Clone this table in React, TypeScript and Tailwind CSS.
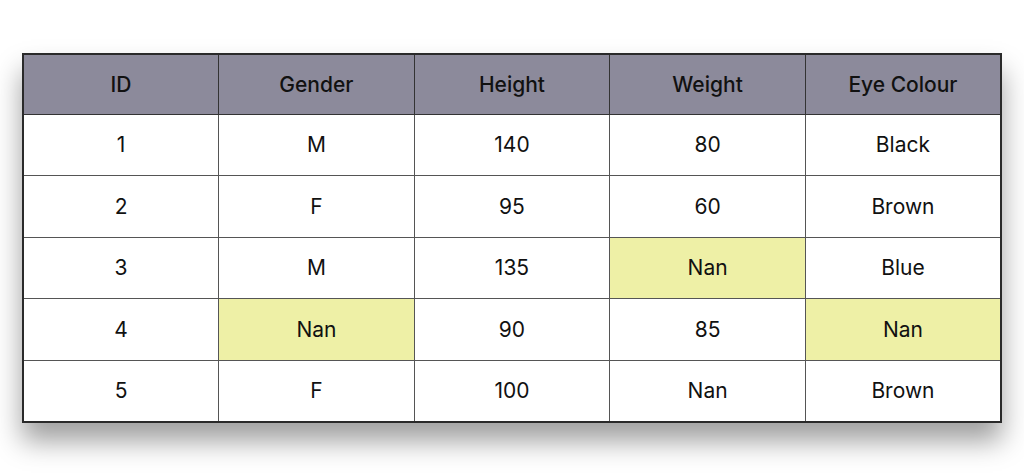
const headers = ["ID", "Gender", "Height", "Weight", "Eye Colour"];

const rows: string[][] = [
  ["1", "M", "140", "80", "Black"],
  ["2", "F", "95", "60", "Brown"],
  ["3", "M", "135", "Nan", "Blue"],
  ["4", "Nan", "90", "85", "Nan"],
  ["5", "F", "100", "Nan", "Brown"],
];

// cells that are highlighted as missing values
const marked = new Set(["2-3", "3-1", "3-4"]);

export default function App() {
  return (
    <div className="w-[1024px] h-[476px] bg-white pt-[53px] pl-[22px] font-['Inter',sans-serif]">
      <div className="w-[980px] shadow-[0_18px_26px_rgba(0,0,0,0.38)]">
        <table className="w-full table-fixed border-collapse border-2 border-[#2a2a2a] text-[21px] text-[#111]">
          <thead>
            <tr className="h-[60px] bg-[#8c8a9b]">
              {headers.map((h) => (
                <th key={h} className="border border-[#333] font-medium text-center">
                  {h}
                </th>
              ))}
            </tr>
          </thead>
          <tbody>
            {rows.map((r, i) => (
              <tr key={i} className="h-[61.6px]">
                {r.map((c, j) => (
                  <td
                    key={j}
                    className={
                      "border border-[#555] text-center " +
                      (marked.has(`${i}-${j}`) ? "bg-[#eef0a6]" : "bg-white")
                    }
                  >
                    {c}
                  </td>
                ))}
              </tr>
            ))}
          </tbody>
        </table>
      </div>
    </div>
  );
}
